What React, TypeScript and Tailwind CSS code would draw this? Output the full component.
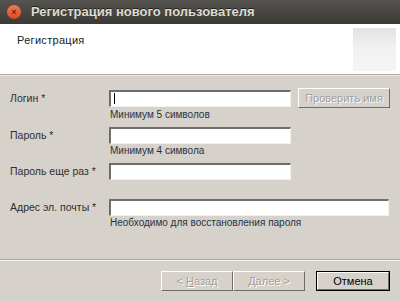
const font = "font-['Liberation_Sans',Arial,sans-serif]";

function Input({ w, cursor }: { w: string; cursor?: boolean }) {
  return (
    <div
      className={`${w} shrink-0 h-[17px] bg-white border-t-2 border-l-2 border-b border-r border-t-[#6f6d69] border-l-[#6f6d69] border-b-[#f2f1ee] border-r-[#f2f1ee] flex items-center pl-[3px]`}
    >
      {cursor && <div className="w-px h-[11px] bg-black" />}
    </div>
  );
}

function Btn({
  children,
  w,
  disabled,
  primary,
}: {
  children: React.ReactNode;
  w: string;
  disabled?: boolean;
  primary?: boolean;
}) {
  return (
    <div className={`${w} shrink-0 h-[20px] ${primary ? 'border border-black' : ''}`}>
      <div className="w-full h-full border-t border-l border-t-white border-l-white border-b border-r border-b-[#6f6c67] border-r-[#6f6c67] bg-[#d6d2cb] flex items-center justify-center">
        <span
          className={`text-[11px] whitespace-nowrap ${
            disabled ? 'text-[#a29e97] [text-shadow:1px_1px_0_#ffffff]' : 'text-black'
          }`}
        >
          {children}
        </span>
      </div>
    </div>
  );
}

function Label({ children }: { children: React.ReactNode }) {
  return (
    <div className="w-[109px] shrink-0 pl-[10px] whitespace-nowrap text-[10.5px] text-[#2e2e2e] leading-[17px]">
      {children}
    </div>
  );
}

function Hint({ children }: { children: React.ReactNode }) {
  return (
    <div className="ml-[110px] whitespace-nowrap text-[10px] leading-[12px] text-[#1f3246] mt-px">{children}</div>
  );
}

export default function App() {
  return (
    <div className={`w-[400px] h-[301px] flex flex-col bg-[#d6d2cb] overflow-hidden ${font}`}>
      <div className="h-[24px] shrink-0 flex items-center gap-[10px] pl-[7px] bg-gradient-to-b from-[#55544f] to-[#3b3a36]">
        <div className="w-[14px] h-[14px] rounded-full bg-gradient-to-b from-[#f47a4f] to-[#d64b1f] flex items-center justify-center">
          <span className="text-[9px] leading-none text-[#6b2310] font-bold">×</span>
        </div>
        <span className="text-[13px] font-bold text-[#dfdbd2] [text-shadow:0_-1px_0_#222]">
          Регистрация нового пользователя
        </span>
      </div>
      <div className="h-[50px] shrink-0 bg-white flex justify-between">
        <div className="pl-[17px] pt-[8px] text-[11px] text-[#222] tracking-[0.3px]">Регистрация</div>
        <div className="w-[43px] h-[43px] mt-[4px] mr-[4px] bg-gradient-to-b from-[#e3e3e3] to-[#f5f5f5] via-[#f2f2f2]" />
      </div>
      <div className="h-px shrink-0 bg-[#aeaba4]" />
      <div className="h-px shrink-0 bg-[#ebe9e5]" />
      <div className="flex flex-col shrink-0 pt-[12px] h-[183px]">
        <div className="flex items-center">
          <Label>Логин *</Label>
          <Input w="w-[182px]" cursor />
          <div className="ml-[7px]">
            <Btn w="w-[92px]" disabled>
              Проверить имя
            </Btn>
          </div>
        </div>
        <Hint>Минимум 5 символов</Hint>
        <div className="flex items-center mt-[6px]">
          <Label>Пароль *</Label>
          <Input w="w-[182px]" />
        </div>
        <Hint>Минимум 4 символа</Hint>
        <div className="flex items-center mt-[6px]">
          <Label>Пароль еще раз *</Label>
          <Input w="w-[182px]" />
        </div>
        <div className="flex items-center mt-[19px]">
          <Label>Адрес эл. почты *</Label>
          <Input w="w-[280px]" />
        </div>
        <Hint>Необходимо для восстановления пароля</Hint>
      </div>
      <div className="h-px shrink-0 bg-[#aeaba4]" />
      <div className="h-px shrink-0 bg-[#f4f3f0]" />
      <div className="flex pt-[10px] pl-[161px]">
        <Btn w="w-[72px]" disabled>
          &lt; <span className="underline">Н</span>азад
        </Btn>
        <Btn w="w-[72px]" disabled>
          <span className="underline">Д</span>алее &gt;
        </Btn>
        <div className="ml-[11px]">
          <Btn w="w-[74px]" primary>
            Отмена
          </Btn>
        </div>
      </div>
    </div>
  );
}
